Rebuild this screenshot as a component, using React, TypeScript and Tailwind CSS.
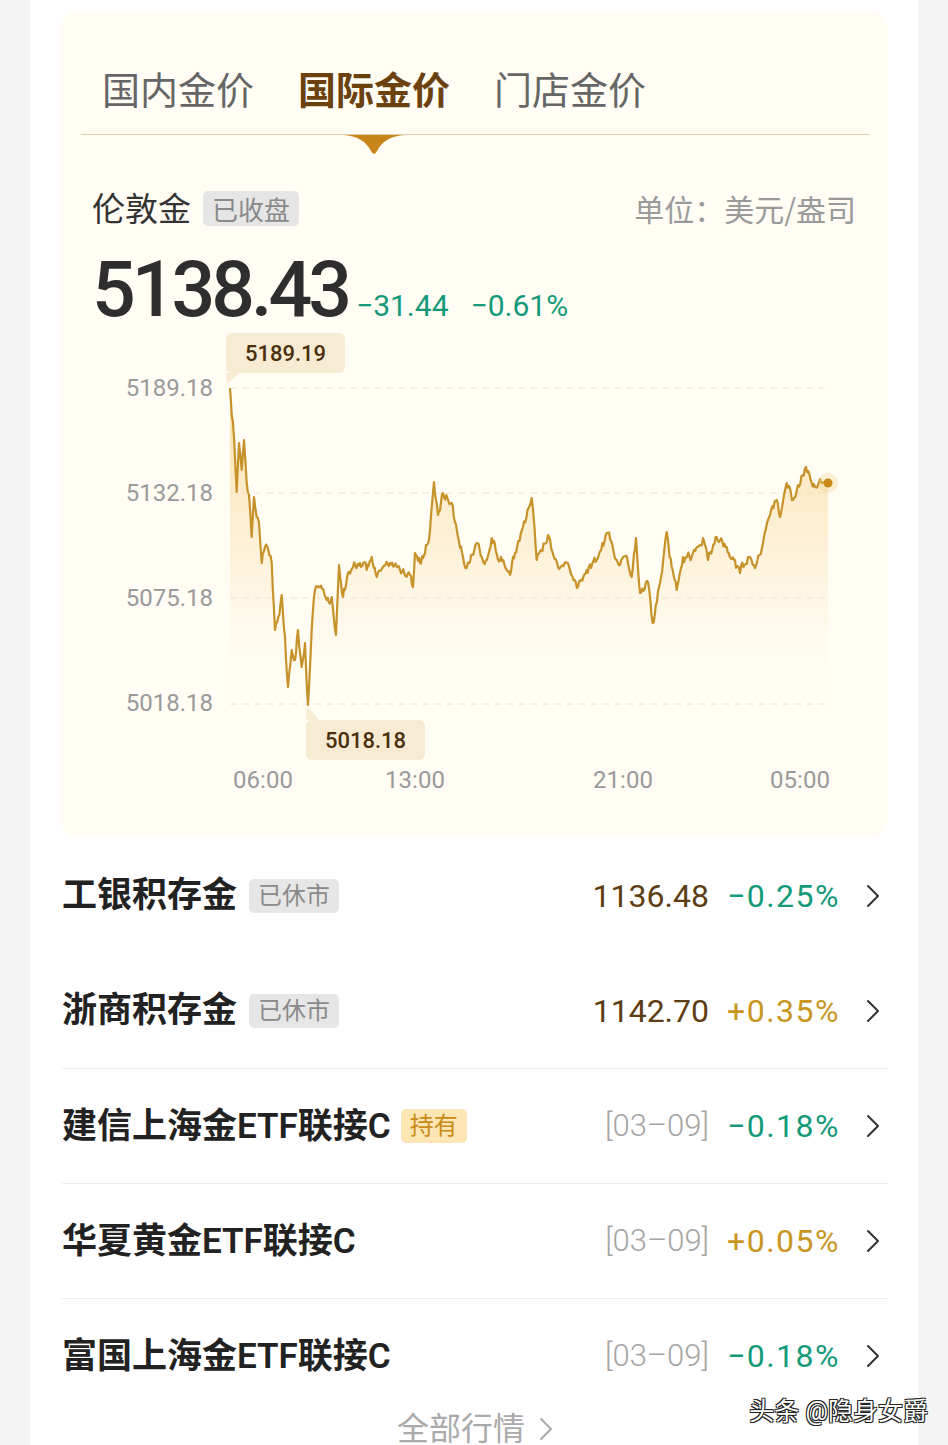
import { useMemo } from "react";

type Pt = [number, number];

// rough trace of the London gold curve, page coordinates
const KEY: Pt[] = [
  [230, 388], [231.7, 415], [234, 437], [236.7, 492], [239, 443], [241.7, 470], [244, 440],
  [246.7, 483], [249, 495], [251.7, 537], [254, 497], [256.7, 517], [259, 523], [261.7, 563],
  [265, 547], [268.3, 550], [271.7, 563], [275, 630], [278.3, 617], [281.7, 595], [285, 637],
  [288, 687], [291.7, 650], [295, 660], [298, 630], [301.7, 667], [305, 643], [308, 705],
  [311.7, 630], [315, 590], [320, 587], [326.7, 600], [331.7, 597], [336, 635], [339, 565],
  [343, 597], [348, 573], [353, 567], [360, 563], [366.7, 570], [371.7, 557], [376.7, 577],
  [383, 567], [390, 563], [400, 570], [410, 575], [413, 587], [415, 553], [420, 563],
  [425, 553], [430, 530], [434, 482], [438, 515], [443, 493], [451.7, 503], [458, 537],
  [463, 557], [466.7, 568], [476.7, 543], [481.7, 557], [486.7, 560], [491.7, 538],
  [500, 560], [510, 575], [515, 553], [523, 527], [531.7, 498], [536.7, 560], [548, 535],
  [558, 567], [566.7, 563], [578, 587], [586.7, 570], [596.7, 560], [608, 533], [616.7, 560],
  [628, 563], [631.7, 577], [636, 538], [640, 593], [648, 582], [652.7, 623], [660, 583],
  [666.7, 532], [671.7, 567], [676.7, 590], [683, 557], [691.7, 557], [703, 538], [708, 560],
  [716.7, 537], [726.7, 547], [735, 560], [740, 573], [748, 557], [755, 568], [763, 543],
  [768, 520], [776.7, 500], [780, 517], [786.7, 483], [793, 500], [798, 485], [806, 467],
  [811.7, 483], [818, 485], [823, 482], [828, 483],
];

const OX = 230;
const OY = 330;
const GRID = [58, 163, 268, 374];

function buildSeries(): Pt[] {
  let seed = 11;
  const rand = () => {
    seed = (seed * 16807) % 2147483647;
    return seed / 2147483647;
  };
  const out: Pt[] = [];
  let off = 0;
  for (let i = 0; i < KEY.length - 1; i++) {
    const [x0, y0] = KEY[i];
    const [x1, y1] = KEY[i + 1];
    const n = Math.max(1, Math.round((x1 - x0) / 1.1));
    for (let j = 0; j < n; j++) {
      const t = j / n;
      off = off * 0.45 + (rand() - 0.5) * 8;
      const y = y0 + (y1 - y0) * t + (j === 0 ? 0 : off);
      out.push([x0 + (x1 - x0) * t - OX, Math.min(705, Math.max(388, y)) - OY]);
    }
  }
  const last = KEY[KEY.length - 1];
  out.push([last[0] - OX, last[1] - OY]);
  return out;
}

function Chevron({ className = "" }: { className?: string }) {
  return (
    <svg width="14" height="24" viewBox="0 0 14 24" className={className}>
      <polyline points="2,2 12,12 2,22" fill="none" stroke="currentColor" strokeWidth="2" strokeLinecap="round" strokeLinejoin="round" />
    </svg>
  );
}

function GoldChart() {
  const { line, area, end } = useMemo(() => {
    const s = buildSeries();
    const line = s.map(([x, y], i) => `${i ? "L" : "M"}${x.toFixed(1)} ${y.toFixed(1)}`).join(" ");
    const e = s[s.length - 1];
    const area = `${line} L${e[0].toFixed(1)} ${GRID[3]} L0 ${GRID[3]} Z`;
    return { line, area, end: e };
  }, []);

  return (
    <div className="relative mt-[1px] flex">
      {/* y axis */}
      <div className="flex w-[121px] flex-col items-end gap-[81px] pt-[46px] text-[24px] leading-[24px] text-[#9a9a9a]">
        <span>5189.18</span>
        <span>5132.18</span>
        <span>5075.18</span>
        <span>5018.18</span>
      </div>

      <div className="ml-[17px] flex-1">
        <svg width="626" height="430" viewBox="0 0 626 430" className="block overflow-visible">
          <defs>
            <linearGradient id="goldFill" x1="0" y1="58" x2="0" y2="374" gradientUnits="userSpaceOnUse">
              <stop offset="0" stopColor="#f9cd80" stopOpacity="0.65" />
              <stop offset="0.55" stopColor="#fbe1b2" stopOpacity="0.38" />
              <stop offset="1" stopColor="#fff8ea" stopOpacity="0" />
            </linearGradient>
          </defs>
          {GRID.map((y) => (
            <line key={y} x1="0" x2="600" y1={y} y2={y} stroke="#ebe6d8" strokeWidth="1" strokeDasharray="7 5" />
          ))}
          <path d={area} fill="url(#goldFill)" />
          <path d={line} fill="none" stroke="#c6932a" strokeWidth="2.2" strokeLinejoin="round" />
          <circle cx={end[0]} cy={end[1]} r="10" fill="#f6cf86" opacity="0.3" />
          <circle cx={end[0]} cy={end[1]} r="4.5" fill="#c8881a" />
        </svg>

        {/* x axis */}
        <div className="mt-[8px] flex text-[24px] leading-[24px] text-[#9a9a9a]">
          <span className="ml-[3px] w-[60px] text-center">06:00</span>
          <span className="ml-[92px] w-[60px] text-center">13:00</span>
          <span className="ml-[148px] w-[60px] text-center">21:00</span>
          <span className="ml-[117px] w-[60px] text-center">05:00</span>
        </div>
      </div>

      {/* high / low tags */}
      <div className="absolute left-[134px] top-[3px]">
        <div className="flex h-[40px] w-[119px] items-center justify-center rounded-[6px] bg-[#f7ebd3] text-[22px] font-medium text-[#4b2f0c]">
          5189.19
        </div>
        <svg width="14" height="12" viewBox="0 0 14 12" className="block">
          <path d="M0 0 H13 L1 11 Z" fill="#f7ebd3" />
        </svg>
      </div>
      <div className="absolute left-[214px] top-[376px]">
        <svg width="14" height="14" viewBox="0 0 14 14" className="block">
          <path d="M1 0 L13 14 H0 Z" fill="#f7ebd3" />
        </svg>
        <div className="flex h-[40px] w-[119px] items-center justify-center rounded-[6px] bg-[#f7ebd3] text-[22px] font-medium text-[#4b2f0c]">
          5018.18
        </div>
      </div>
    </div>
  );
}

type Row = {
  name: string;
  tag?: { text: string; kind: "closed" | "hold" };
  price?: string;
  date?: string;
  pct: string;
  up: boolean;
};

const ROWS: Row[] = [
  { name: "工银积存金", tag: { text: "已休市", kind: "closed" }, price: "1136.48", pct: "−0.25%", up: false },
  { name: "浙商积存金", tag: { text: "已休市", kind: "closed" }, price: "1142.70", pct: "+0.35%", up: true },
  { name: "建信上海金ETF联接C", tag: { text: "持有", kind: "hold" }, date: "[03–09]", pct: "−0.18%", up: false },
  { name: "华夏黄金ETF联接C", date: "[03–09]", pct: "+0.05%", up: true },
  { name: "富国上海金ETF联接C", date: "[03–09]", pct: "−0.18%", up: false },
];

function FundRow({ row, divider }: { row: Row; divider: boolean }) {
  return (
    <div className={`flex h-[115px] items-center ${divider ? "border-t border-[#ededed]" : ""}`}>
      <span className="text-[35px] font-semibold leading-none text-[#222]">{row.name}</span>
      {row.tag && (
        <span
          className={
            row.tag.kind === "closed"
              ? "ml-[12px] flex h-[34px] items-center rounded-[5px] bg-[#e6e6e6] px-[9px] text-[24px] text-[#8a8a8a]"
              : "ml-[10px] flex h-[34px] items-center rounded-[5px] bg-[#fde6b3] px-[9px] text-[24px] text-[#c98a17]"
          }
        >
          {row.tag.text}
        </span>
      )}
      <div className="ml-auto flex items-center pr-[8px]">
        {row.price && <span className="text-[32px] text-[#5d3d12]">{row.price}</span>}
        {row.date && <span className="text-[31px] font-light text-[#a5a5a5]">{row.date}</span>}
        <span className={`ml-[18px] text-[32px] tracking-[1.5px] ${row.up ? "text-[#c9961f]" : "text-[#149a7a]"}`}>{row.pct}</span>
        <Chevron className="ml-[26px] text-[#333]" />
      </div>
    </div>
  );
}

export default function App() {
  return (
    <div className="relative flex h-[1445px] w-[948px] overflow-hidden bg-[#f4f4f4] px-[30px] font-['Roboto','Noto_Sans_CJK_SC',sans-serif]">
      <div className="flex-1 bg-white">
        {/* gold price panel */}
        <div className="mx-[30px] mt-[10px] rounded-[20px] bg-[#fffdf4] pb-[46px]">
          <div className="ml-[21px] mr-[18px] flex gap-[44px] border-b border-[#ddd0ad] pb-[28px] pl-[21px] pt-[60px] font-['Noto_Sans_CJK_SC',sans-serif] text-[38px] leading-[36px]">
            <span className="text-[#666]">国内金价</span>
            <span className="relative font-bold text-[#6b410e]">
              国际金价
              <svg width="62" height="21" viewBox="0 0 62 21" className="absolute left-1/2 top-[calc(100%+29px)] -translate-x-1/2">
                <path d="M0 0 H62 C48 1 39 6 34 16 Q31 22 28 16 C23 6 14 1 0 0 Z" fill="#c8861a" />
              </svg>
            </span>
            <span className="text-[#666]">门店金价</span>
          </div>

          <div className="px-[32px]">
            <div className="mt-[55px] flex h-[36px] items-center">
              <span className="font-['Noto_Sans_CJK_SC',sans-serif] text-[33px] text-[#333]">伦敦金</span>
              <span className="ml-[12px] flex h-[35px] items-center rounded-[5px] bg-[#e6e6e6] px-[9px] font-['Noto_Sans_CJK_SC',sans-serif] text-[26px] text-[#8a8a8a]">
                已收盘
              </span>
              <span className="ml-auto font-['Noto_Sans_CJK_SC',sans-serif] text-[30px] text-[#9a9a9a]">
                单位：美元/盎司
              </span>
            </div>

            <div className="mt-[26px] flex items-baseline">
              <span className="text-[77px] font-medium leading-[77px] tracking-[-4px] text-[#2e2e2e]">5138.43</span>
              <span className="ml-[8px] text-[30px] text-[#149a7a]">−31.44</span>
              <span className="ml-[22px] text-[30px] text-[#149a7a]">−0.61%</span>
            </div>

            <GoldChart />
          </div>
        </div>

        {/* fund list */}
        <div className="ml-[32px] mr-[30px]">
          {ROWS.map((r, i) => (
            <FundRow key={r.name} row={r} divider={i >= 2} />
          ))}
          <div className="flex items-center justify-center gap-[14px] text-[32px] leading-[32px] text-[#aaa]">
            <span>全部行情</span>
            <Chevron className="text-[#aaa]" />
          </div>
        </div>
      </div>

      <span className="absolute bottom-[21px] right-[20px] text-[25px] leading-[25px] text-white [text-shadow:-1px_-1px_0_#222,1px_-1px_0_#222,-1px_1px_0_#222,1px_1px_0_#222]">
        头条 @隐身女爵
      </span>
    </div>
  );
}
